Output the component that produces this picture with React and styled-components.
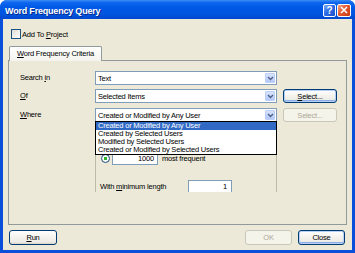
import React from "react";
import styled, { createGlobalStyle } from "styled-components";

const GlobalStyle = createGlobalStyle`
  html, body {
    margin: 0;
    padding: 0;
    background: #ffffff;
  }
  body {
    font-family: "Liberation Sans", Arial, sans-serif;
  }
`;

const Window = styled.div`
  width: 355px;
  height: 253px;
  display: flex;
  flex-direction: column;
  background: #0a4fd9;
  border-radius: 7px 7px 0 0;
  overflow: hidden;
  font-family: "Liberation Sans", Arial, sans-serif;
  font-size: 7.5px;
  letter-spacing: -0.2px;
  color: #000;
`;

const TitleBar = styled.div`
  height: 19px;
  flex-shrink: 0;
  box-sizing: border-box;
  display: flex;
  align-items: center;
  padding: 1px 4px 0 5px;
  background: linear-gradient(
    to bottom,
    #3d8df6 0%,
    #0d66ee 14%,
    #0058e6 40%,
    #0054df 75%,
    #0047cc 100%
  );
`;

const Title = styled.div`
  flex: 1;
  padding-top: 1px;
  color: #fff;
  font-weight: bold;
  font-size: 9px;
  letter-spacing: -0.2px;
  text-shadow: 1px 1px 0 #0b2a8a;
`;

const TitleButton = styled.div`
  width: ${(p) => p.$w}px;
  height: 13px;
  box-sizing: border-box;
  border: 1px solid #fff;
  border-radius: 2px;
  display: flex;
  align-items: center;
  justify-content: center;
  color: #fff;
  font-weight: bold;
  font-size: 10px;
  letter-spacing: 0;
  background: ${(p) =>
    p.$close
      ? "linear-gradient(135deg, #f5a585 0%, #e2562f 45%, #c73c16 100%)"
      : "linear-gradient(135deg, #86adf7 0%, #2f6ce6 45%, #1b4fcb 100%)"};
  & + & {
    margin-left: 1px;
  }
`;

const Body = styled.div`
  flex: 1;
  margin: 0 3px 3px;
  background: #ece9d8;
  display: flex;
  flex-direction: column;
  padding: 10px 5px 5px;
`;

const CheckRow = styled.label`
  height: 10px;
  display: flex;
  align-items: center;
  padding-left: 3px;
`;

const CheckBox = styled.span`
  width: 10px;
  height: 10px;
  box-sizing: border-box;
  border: 1px solid #1c5180;
  background: linear-gradient(135deg, #dcdbd5 0%, #f4f3ee 60%, #ffffff 100%);
  margin-right: 1px;
`;

const U = styled.span`
  text-decoration: underline;
`;

const TabStrip = styled.div`
  margin-top: 7px;
  height: 14px;
  display: flex;
  padding-left: 1px;
  position: relative;
  z-index: 1;
`;

const Tab = styled.div`
  height: 15px;
  box-sizing: border-box;
  padding: 0 7px 1px;
  display: flex;
  align-items: center;
  border: 1px solid #919b9c;
  border-bottom: none;
  border-radius: 2px 2px 0 0;
  background: linear-gradient(to bottom, #ffffff 0%, #f4f3ee 100%);
  box-shadow: inset 0 1px 0 #fff;
`;

const Panel = styled.div`
  flex: 1;
  box-sizing: border-box;
  border: 1px solid #919b9c;
  background: #ece9d8;
  padding: 10px 0 0 11px;
  display: grid;
  grid-template-columns: 69px 182px 54px;
  grid-auto-rows: min-content;
  column-gap: 6px;
  row-gap: 4px;
  align-content: start;
`;

const FieldLabel = styled.div`
  padding-top: 2px;
  margin-top: ${(p) => p.$mt || 0}px;
  line-height: 9px;
`;

const Combo = styled.div`
  position: relative;
  height: 14px;
  margin-top: ${(p) => p.$mt || 0}px;
  box-sizing: border-box;
  border: 1px solid #7f9db9;
  background: #fff;
  display: flex;
  align-items: stretch;
`;

const ComboText = styled.div`
  flex: 1;
  padding-left: 2px;
  display: flex;
  align-items: center;
`;

const ComboArrow = styled.div`
  width: 10px;
  margin: 1px;
  box-sizing: border-box;
  border: 1px solid #bcd0f7;
  border-radius: 1px;
  background: linear-gradient(to bottom, #d8e4fc 0%, #c2d3fb 60%, #b4c8f6 100%);
  display: flex;
  align-items: center;
  justify-content: center;
`;

const DropList = styled.div`
  position: absolute;
  top: 100%;
  left: -1px;
  right: -1px;
  z-index: 5;
  box-sizing: border-box;
  border: 1px solid #000;
  background: #fff;
`;

const DropItem = styled.div`
  height: 8px;
  line-height: 8px;
  padding-left: 2px;
  white-space: nowrap;
  background: ${(p) => (p.$active ? "#316ac5" : "#fff")};
  color: ${(p) => (p.$active ? "#fff" : "#000")};
`;

const Button = styled.div`
  width: ${(p) => p.$w}px;
  height: ${(p) => p.$h || 14}px;
  margin-top: ${(p) => p.$mt || 0}px;
  box-sizing: border-box;
  border: 1px solid ${(p) => (p.$disabled ? "#c9c7ba" : "#003c74")};
  border-radius: 3px;
  display: flex;
  align-items: center;
  justify-content: center;
  color: ${(p) => (p.$disabled ? "#aca899" : "#000")};
  background: ${(p) =>
    p.$disabled
      ? "#f5f4ea"
      : "linear-gradient(to bottom, #ffffff 0%, #f3f2ed 50%, #ecebe6 85%, #d8d2c6 100%)"};
  box-shadow: ${(p) =>
    p.$focus ? "inset 0 0 0 1px #b8d0f5, inset 0 -1px 0 1px #89ade4" : "none"};
`;

const Frame = styled.div`
  grid-column: 2;
  height: 66px;
  box-sizing: border-box;
  border-left: 1px solid #bdbaa8;
  border-right: 1px solid #bdbaa8;
  overflow: hidden;
  padding: 26px 0 0 4px;
`;

const FrameRow = styled.div`
  height: 13px;
  display: flex;
  align-items: center;
  margin-top: ${(p) => p.$mt || 0}px;
`;

const Radio = styled.span`
  width: 9px;
  height: 9px;
  margin-left: 1px;
  box-sizing: border-box;
  border-radius: 50%;
  border: 1px solid #1c5180;
  background: radial-gradient(circle, #2fb52f 0 1.6px, #ffffff 2px, #e6e4dc 100%);
`;

const TextBox = styled.div`
  width: ${(p) => p.$w}px;
  height: 13px;
  margin-left: ${(p) => p.$ml || 0}px;
  box-sizing: border-box;
  border: 1px solid #7f9db9;
  background: #fff;
  display: flex;
  align-items: center;
  justify-content: flex-end;
  padding-right: ${(p) => p.$pr || 3}px;
`;

const InlineText = styled.span`
  margin-left: ${(p) => p.$ml || 0}px;
  width: ${(p) => (p.$w ? `${p.$w}px` : "auto")};
  white-space: nowrap;
`;

const ButtonRow = styled.div`
  margin-top: 5px;
  height: 15px;
  display: flex;
  padding: 0 2px 0 1px;
  gap: 6px;
`;

const Spacer = styled.div`
  flex: 1;
`;

const Chevron = () => (
  <svg width="7" height="5" viewBox="0 0 7 5">
    <path d="M1 1 L3.5 3.5 L6 1" fill="none" stroke="#4d6185" strokeWidth="1.4" />
  </svg>
);

const CloseGlyph = () => (
  <svg width="8" height="8" viewBox="0 0 8 8">
    <path d="M1 1 L7 7 M7 1 L1 7" stroke="#fff" strokeWidth="1.6" />
  </svg>
);

const whereOptions = [
  "Created or Modified by Any User",
  "Created by Selected Users",
  "Modified by Selected Users",
  "Created or Modified by Selected Users",
];

export default function App() {
  return (
    <>
      <GlobalStyle />
      <Window>
        <TitleBar>
          <Title>Word Frequency Query</Title>
          <TitleButton $w={13}>?</TitleButton>
          <TitleButton $w={14} $close>
            <CloseGlyph />
          </TitleButton>
        </TitleBar>
        <Body>
          <CheckRow>
            <CheckBox />
            <span>
              Add To <U>P</U>roject
            </span>
          </CheckRow>
          <TabStrip>
            <Tab>
              <span>
                <U>W</U>ord Frequency Criteria
              </span>
            </Tab>
          </TabStrip>
          <Panel>
            <FieldLabel>
              Search <U>i</U>n
            </FieldLabel>
            <Combo>
              <ComboText>Text</ComboText>
              <ComboArrow>
                <Chevron />
              </ComboArrow>
            </Combo>
            <div />

            <FieldLabel>
              <U>O</U>f
            </FieldLabel>
            <Combo>
              <ComboText>Selected Items</ComboText>
              <ComboArrow>
                <Chevron />
              </ComboArrow>
            </Combo>
            <Button $w={54} $focus>
              <span>
                <U>S</U>elect...
              </span>
            </Button>

            <FieldLabel $mt={1}>
              <U>W</U>here
            </FieldLabel>
            <Combo $mt={1}>
              <ComboText>Created or Modified by Any User</ComboText>
              <ComboArrow>
                <Chevron />
              </ComboArrow>
              <DropList>
                {whereOptions.map((o, i) => (
                  <DropItem key={o} $active={i === 0}>
                    {o}
                  </DropItem>
                ))}
              </DropList>
            </Combo>
            <Button $w={54} $mt={1} $disabled>
              Select...
            </Button>

            <Frame>
              <FrameRow>
                <Radio />
                <TextBox $w={46} $ml={2}>
                  1000
                </TextBox>
                <InlineText $ml={4}>most frequent</InlineText>
              </FrameRow>
              <FrameRow $mt={15}>
                <InlineText $w={88}>
                  With <U>m</U>inimum length
                </InlineText>
                <TextBox $w={44} $pr={4}>
                  1
                </TextBox>
              </FrameRow>
            </Frame>
          </Panel>
          <ButtonRow>
            <Button $w={48} $h={15}>
              <span>
                <U>R</U>un
              </span>
            </Button>
            <Spacer />
            <Button $w={47} $h={15} $disabled>
              OK
            </Button>
            <Button $w={47} $h={15} $focus>
              Close
            </Button>
          </ButtonRow>
        </Body>
      </Window>
    </>
  );
}
